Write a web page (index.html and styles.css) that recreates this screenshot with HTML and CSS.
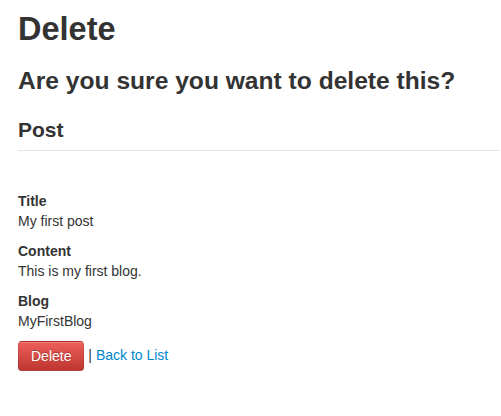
FILE: index.html
```html
<!DOCTYPE html>
<html>
<head>
<meta charset="utf-8">
<title>Delete</title>
<link rel="stylesheet" href="styles.css">
</head>
<body>
<div class="page">
  <h1 class="title">Delete</h1>
  <h2 class="question">Are you sure you want to delete this?</h2>
  <fieldset class="record">
    <h3 class="legend">Post</h3>
    <hr class="rule">
    <dl class="fields">
      <div class="field">
        <dt class="label">Title</dt>
        <dd class="value">My first post</dd>
      </div>
      <div class="field">
        <dt class="label">Content</dt>
        <dd class="value">This is my first blog.</dd>
      </div>
      <div class="field">
        <dt class="label">Blog</dt>
        <dd class="value">MyFirstBlog</dd>
      </div>
    </dl>
  </fieldset>
  <form class="actions">
    <button type="button" class="btn-danger">Delete</button> <span class="sep">|</span> <a class="link" href="#">Back to List</a>
  </form>
</div>
</body>
</html>
```

FILE: styles.css
```css
html, body {
  margin: 0;
  padding: 0;
  background: #fff;
}
body {
  font-family: "Liberation Sans", Arial, Helvetica, sans-serif;
  font-size: 14px;
  line-height: 20px;
  color: #333;
}
.page {
  padding: 0 1px 0 18px;
}
.title {
  font-size: 32.5px;
  line-height: 40px;
  font-weight: bold;
  margin: 9px 0 0;
}
.question {
  font-size: 24.6px;
  line-height: 30px;
  font-weight: bold;
  margin: 17px 0 0;
}
.record {
  border: 0;
  margin: 0;
  padding: 0;
  min-width: 0;
}
.legend {
  font-size: 21px;
  line-height: 26px;
  font-weight: bold;
  margin: 21px 0 0;
}
.rule {
  border: 0;
  border-top: 1px solid #e5e5e5;
  height: 0;
  margin: 7px 0 0;
}
.fields {
  margin: 40px 0 0;
  padding: 0;
}
.field {
  margin: 0 0 10px;
}
.field:last-child {
  margin-bottom: 0;
}
.label {
  font-weight: bold;
  margin: 0;
}
.value {
  margin: 0;
}
.actions {
  margin: 10px 0 0;
}
.btn-danger {
  font-family: "Liberation Sans", Arial, Helvetica, sans-serif;
  font-size: 14px;
  line-height: 20px;
  padding: 4px 12px;
  color: #fff;
  text-shadow: 0 -1px 0 rgba(0, 0, 0, 0.25);
  background-color: #da4f49;
  background-image: linear-gradient(to bottom, #ee5f5b, #bd362f);
  border: 1px solid rgba(0, 0, 0, 0.1);
  border-bottom-color: rgba(0, 0, 0, 0.25);
  border-radius: 4px;
  box-shadow: inset 0 1px 0 rgba(255, 255, 255, 0.2), 0 1px 2px rgba(0, 0, 0, 0.05);
  vertical-align: middle;
  cursor: pointer;
}
.sep {
  color: #333;
}
.link {
  color: #0088cc;
  text-decoration: none;
}
```
